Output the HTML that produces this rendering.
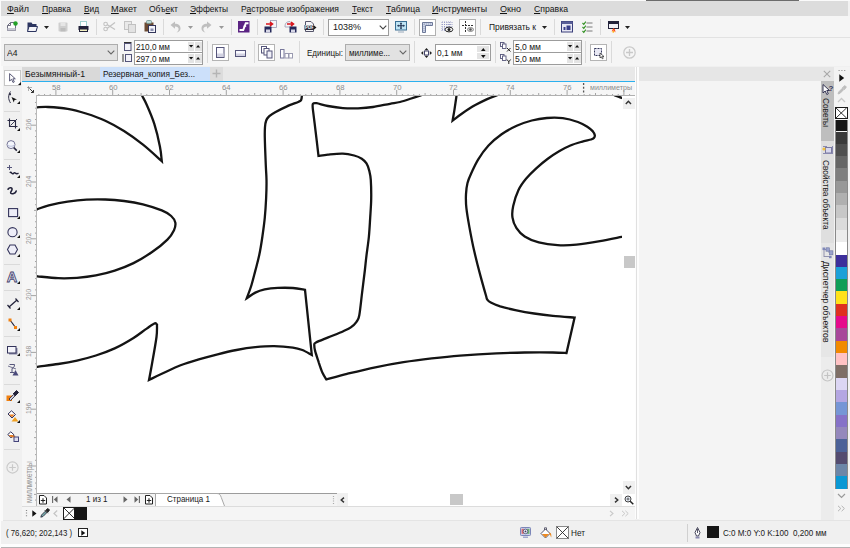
<!DOCTYPE html>
<html lang="ru"><head><meta charset="utf-8"><title>CorelDRAW</title>
<style>
html,body{margin:0;padding:0;}
body{width:850px;height:548px;position:relative;overflow:hidden;background:#f0f0f0;font-family:"Liberation Sans",sans-serif;}
.a{position:absolute;}
.t{position:absolute;white-space:nowrap;transform-origin:0 0;}
svg{position:absolute;overflow:visible;}
u{text-decoration:underline;text-underline-offset:1px;}
</style></head><body>
<div class="a" style="left:0px;top:0px;width:850px;height:1px;background:#fafafa;"></div>
<div class="a" style="left:645.6px;top:0px;width:153px;height:1.2px;background:#6c6c6c;"></div>
<div class="a" style="left:0px;top:1px;width:850px;height:15px;background:#dcdcdc;"></div>
<div class="a" style="left:847.6px;top:1px;width:2.4px;height:15px;background:#f2f2f2;"></div>
<div class="a" style="left:0px;top:16px;width:850px;height:50px;background:#f5f5f5;"></div>
<div class="a" style="left:0px;top:37px;width:850px;height:1px;background:#e2e2e2;"></div>
<div class="a" style="left:0px;top:66px;width:850px;height:482px;background:#f0f0f0;"></div>
<span id="t1" class="t" style="left:7px;top:2.7px;font-size:9px;line-height:12px;color:#151515;transform:scaleX(0.9936);"><u>Ф</u>айл</span>
<span id="t2" class="t" style="left:42px;top:2.7px;font-size:9px;line-height:12px;color:#151515;transform:scaleX(0.9538);"><u>П</u>равка</span>
<span id="t3" class="t" style="left:84px;top:2.7px;font-size:9px;line-height:12px;color:#151515;transform:scaleX(0.9204);"><u>В</u>ид</span>
<span id="t4" class="t" style="left:111px;top:2.7px;font-size:9px;line-height:12px;color:#151515;transform:scaleX(1.0202);"><u>М</u>акет</span>
<span id="t5" class="t" style="left:149px;top:2.7px;font-size:9px;line-height:12px;color:#151515;transform:scaleX(0.9455);">Объ<u>е</u>кт</span>
<span id="t6" class="t" style="left:190px;top:2.7px;font-size:9px;line-height:12px;color:#151515;transform:scaleX(0.9286);"><u>Э</u>ффекты</span>
<span id="t7" class="t" style="left:241px;top:2.7px;font-size:9px;line-height:12px;color:#151515;transform:scaleX(0.9492);">Р<u>а</u>стровые изображения</span>
<span id="t8" class="t" style="left:352px;top:2.7px;font-size:9px;line-height:12px;color:#151515;transform:scaleX(0.9263);"><u>Т</u>екст</span>
<span id="t9" class="t" style="left:386px;top:2.7px;font-size:9px;line-height:12px;color:#151515;transform:scaleX(0.9633);"><u>Т</u>аблица</span>
<span id="t10" class="t" style="left:432px;top:2.7px;font-size:9px;line-height:12px;color:#151515;transform:scaleX(0.9800);"><u>И</u>нструменты</span>
<span id="t11" class="t" style="left:500px;top:2.7px;font-size:9px;line-height:12px;color:#151515;transform:scaleX(1.0030);"><u>О</u>кно</span>
<span id="t12" class="t" style="left:534px;top:2.7px;font-size:9px;line-height:12px;color:#151515;transform:scaleX(0.9628);"><u>С</u>правка</span>
<svg style="left:6px;top:21px" width="12" height="11" viewBox="0 0 12 11"><path d="M1.5 4.5L4.5 1.5H9.5V9.5H1.5Z" fill="#fdfdfd" stroke="#6e6e80" stroke-width="1"/><path d="M1.5 4.5H4.5V1.5" fill="none" stroke="#6e6e80" stroke-width="1"/><rect x="1.5" y="7" width="8" height="2.5" fill="#c9c9d4"/><circle cx="9.5" cy="2.5" r="2.2" fill="#23a127"/></svg>
<svg style="left:27px;top:22px" width="11" height="10" viewBox="0 0 11 10"><path d="M0.5 0.5H4.5L5.5 2H9.5V9.5H0.5Z" fill="#2c3560"/><path d="M2 4.5H10.5L9 9.5H0.5Z" fill="#f4f4f8" stroke="#2c3560" stroke-width="1"/></svg>
<svg style="left:44px;top:26px" width="5" height="3" viewBox="0 0 5 3"><path d="M0 0H5L2.5 3Z" fill="#222"/></svg>
<svg style="left:58px;top:22px" width="10" height="10" viewBox="0 0 10 10"><rect x="0.5" y="0.5" width="9" height="9" rx="1" fill="#cfcfcf"/><rect x="2.5" y="0.5" width="5" height="3.5" fill="#e6e6e6"/><rect x="2.5" y="6" width="5" height="3.5" fill="#bdbdbd"/></svg>
<svg style="left:78px;top:21px" width="11" height="11" viewBox="0 0 11 11"><rect x="2.5" y="0.5" width="6" height="5" fill="#fff" stroke="#9fd0cf" stroke-width="1"/><rect x="0.5" y="5" width="10" height="4" fill="#22223a"/><rect x="1.5" y="8" width="8" height="2.5" fill="#f3f0c0" stroke="#22223a" stroke-width="1"/></svg>
<div class="a" style="left:96px;top:19px;width:1px;height:16px;background:#dadada;"></div>
<svg style="left:103px;top:21px" width="13" height="11" viewBox="0 0 13 11"><path d="M4 3.5L12 8.5M4 7.5L12 1.5" stroke="#c2c2c2" stroke-width="1.2" fill="none"/><circle cx="2.6" cy="3" r="1.8" fill="none" stroke="#c2c2c2" stroke-width="1.1"/><circle cx="2.6" cy="8" r="1.8" fill="none" stroke="#c2c2c2" stroke-width="1.1"/></svg>
<svg style="left:124px;top:21px" width="12" height="12" viewBox="0 0 12 12"><rect x="0.5" y="0.5" width="7" height="8" fill="#e9e9e9" stroke="#c4c4c4"/><rect x="4.5" y="3.5" width="7" height="8" fill="#e2e2e2" stroke="#c0c0c0"/></svg>
<svg style="left:144px;top:20px" width="12" height="13" viewBox="0 0 12 13"><rect x="0.5" y="2.5" width="9" height="9" fill="#6b4a32"/><rect x="2.5" y="0.5" width="5" height="3" rx="1" fill="#b9d7d4" stroke="#6f8f8c" stroke-width=".8"/><rect x="4.5" y="5.5" width="7" height="7" fill="#f4f4fa" stroke="#33365a" stroke-width="1"/><rect x="6.5" y="8.5" width="3" height="2.5" fill="#8a8fb0"/></svg>
<div class="a" style="left:163px;top:19px;width:1px;height:16px;background:#dadada;"></div>
<svg style="left:170px;top:21px" width="11" height="12" viewBox="0 0 11 12"><path d="M0.5 4L5 0.5V2.8C8.5 2.8 10.5 4.8 10.5 7.5C10.5 9.5 9 11 6.5 11.5C8 10.5 8.6 9.3 8.6 8C8.6 6.5 7.4 5.4 5 5.4V7.8Z" fill="#bfbfbf"/></svg>
<svg style="left:188px;top:26px" width="5" height="3" viewBox="0 0 5 3"><path d="M0 0H5L2.5 3Z" fill="#9a9a9a"/></svg>
<svg style="left:201px;top:21px" width="11" height="12" viewBox="0 0 11 12"><path d="M10.5 4L6 0.5V2.8C2.5 2.8 0.5 4.8 0.5 7.5C0.5 9.5 2 11 4.5 11.5C3 10.5 2.4 9.3 2.4 8C2.4 6.5 3.6 5.4 6 5.4V7.8Z" fill="#bfbfbf"/></svg>
<svg style="left:219px;top:26px" width="5" height="3" viewBox="0 0 5 3"><path d="M0 0H5L2.5 3Z" fill="#9a9a9a"/></svg>
<div class="a" style="left:231px;top:19px;width:1px;height:16px;background:#dadada;"></div>
<svg style="left:238px;top:21px" width="12" height="12" viewBox="0 0 12 12"><rect x="0" y="0" width="11.5" height="11.5" fill="#5b2483"/><path d="M10.5 2.2H7.8L5.2 9H1.5" stroke="#fff" stroke-width="2" fill="none"/><path d="M5.5 5.2H8.2" stroke="#fff" stroke-width="1.2"/></svg>
<div class="a" style="left:257px;top:19px;width:1px;height:16px;background:#dadada;"></div>
<svg style="left:264px;top:20px" width="13" height="13" viewBox="0 0 13 13"><rect x="6.5" y="0.5" width="6" height="7" fill="#f4f4f8" stroke="#9a9ab0" stroke-width=".8"/><rect x="0.5" y="6.5" width="7" height="6" fill="#24285a"/><rect x="2" y="9.5" width="4" height="3" fill="#d6d6e6"/><path d="M2 4H8M6 2L8.5 4L6 6" stroke="#d8141c" stroke-width="1.6" fill="none"/></svg>
<svg style="left:284px;top:20px" width="13" height="13" viewBox="0 0 13 13"><path d="M1 6C1 3 3 1.5 6 1.5L8 3.5V7H1Z" fill="#f4f4f8" stroke="#9a9ab0" stroke-width=".8"/><rect x="5.5" y="6.5" width="7" height="6" fill="#24285a"/><rect x="7" y="9.5" width="4" height="3" fill="#d6d6e6"/><path d="M3 4H9M7 2L9.5 4L7 6" stroke="#d8141c" stroke-width="1.6" fill="none"/></svg>
<svg style="left:304px;top:20px" width="13" height="13" viewBox="0 0 13 13"><path d="M1.5 1.5H7L9.5 4V11.5H1.5Z" fill="#f4f4f8" stroke="#55556a" stroke-width="1"/><rect x="0.5" y="5" width="9" height="5" fill="#2b2b3a"/><text x="1" y="9.2" font-size="4.5" font-family="Liberation Sans, sans-serif" fill="#fff" font-weight="bold">PDF</text><path d="M9.5 5L12.5 7.5L9.5 10Z" fill="#1a1a1a"/></svg>
<div class="a" style="left:323px;top:19px;width:1px;height:16px;background:#dadada;"></div>
<div class="a" style="left:328px;top:19px;width:61px;height:17px;background:#ffffff;border:1px solid #9c9c9c;box-sizing:border-box;"></div>
<span id="t13" class="t" style="left:333px;top:21px;font-size:9px;line-height:12px;color:#151515;transform:scaleX(0.9989);">1038%</span>
<svg style="left:379px;top:25px" width="8" height="5" viewBox="0 0 8 5"><path d="M0.7 0.7L4 4L7.3 0.7" stroke="#444" stroke-width="1.1" fill="none"/></svg>
<svg style="left:395px;top:21px" width="12" height="12" viewBox="0 0 12 12"><rect x="0.5" y="0.5" width="11" height="8.5" fill="#bfe4f4" stroke="#3a6f94" stroke-width="1"/><path d="M6 2V7.5M3 4.8H9" stroke="#1c2c4c" stroke-width="1.1"/><path d="M6 1.2L4.8 2.8H7.2ZM6 8.3L4.8 6.7H7.2ZM2 4.8L3.6 3.6V6ZM10 4.8L8.4 3.6V6Z" fill="#1c2c4c"/><rect x="3" y="10.5" width="6" height="1" fill="#9ab"/></svg>
<div class="a" style="left:414px;top:19px;width:1px;height:16px;background:#dadada;"></div>
<div class="a" style="left:419px;top:19px;width:17px;height:17px;background:#ffffff;border:1px solid #b0b0b0;box-sizing:border-box;"></div>
<svg style="left:422px;top:22px" width="11" height="11" viewBox="0 0 11 11"><path d="M0.5 0.5H10.5V3.5H3.5V10.5H0.5Z" fill="#cdd6e8" stroke="#6d7898" stroke-width="1"/><path d="M2 2H9M2 2V9" stroke="#8d96b6" stroke-width=".8" stroke-dasharray="1 1"/></svg>
<svg style="left:441px;top:21px" width="12" height="12" viewBox="0 0 12 12"><path d="M1 1H11M1 3.5H11M1 6H11M1 8.5H5M1 1V11M3.5 1V11M6 1V6M8.5 1V6M11 1V6" stroke="#8a8fc0" stroke-width=".8" stroke-dasharray="1 1" fill="none"/><ellipse cx="8" cy="8.5" rx="3.8" ry="2.4" fill="#fff" stroke="#222" stroke-width="1"/><circle cx="8" cy="8.5" r="1.5" fill="#222"/></svg>
<div class="a" style="left:459px;top:19px;width:17px;height:17px;background:#ffffff;border:1px solid #b0b0b0;box-sizing:border-box;"></div>
<svg style="left:462px;top:21px" width="12" height="12" viewBox="0 0 12 12"><path d="M3.5 0V12M0 4.5H12" stroke="#333" stroke-width="1" stroke-dasharray="2 1" fill="none"/><ellipse cx="8.5" cy="8.5" rx="3" ry="2" fill="#ddd" stroke="#777" stroke-width=".8"/><circle cx="8.5" cy="8.5" r="1.2" fill="#555"/></svg>
<div class="a" style="left:480px;top:19px;width:1px;height:16px;background:#dadada;"></div>
<span id="t14" class="t" style="left:489px;top:21px;font-size:9px;line-height:12px;color:#151515;transform:scaleX(0.9353);">Привязать к</span>
<svg style="left:542px;top:26px" width="5" height="3" viewBox="0 0 5 3"><path d="M0 0H5L2.5 3Z" fill="#222"/></svg>
<div class="a" style="left:554px;top:19px;width:1px;height:16px;background:#dadada;"></div>
<svg style="left:561px;top:21px" width="12" height="12" viewBox="0 0 12 12"><rect x="0.5" y="0.5" width="11" height="10.5" fill="#e8e8f4" stroke="#3a3f7a" stroke-width="1"/><rect x="0.5" y="0.5" width="11" height="2.5" fill="#5a5f98"/><path d="M2.5 9V6H4.5V9M5.5 9V4.5H9.5V9Z" fill="#3a3f8a"/></svg>
<svg style="left:582px;top:21px" width="11" height="12" viewBox="0 0 11 12"><path d="M4.5 2H10.5M4.5 6H10.5M4.5 10H10.5" stroke="#7a7a7a" stroke-width="1"/><path d="M0.5 2L1.8 3.3L3.8 0.6M0.5 6L1.8 7.3L3.8 4.6M0.5 10L1.8 11.3L3.8 8.6" stroke="#2f8f1f" stroke-width="1.1" fill="none"/></svg>
<div class="a" style="left:600px;top:19px;width:1px;height:16px;background:#dadada;"></div>
<svg style="left:608px;top:21px" width="11" height="12" viewBox="0 0 11 12"><rect x="0.5" y="0.5" width="10" height="7" fill="#f0f0f6" stroke="#22223a" stroke-width="1"/><rect x="0.5" y="0.5" width="10" height="2.5" fill="#22223a"/><path d="M5.5 7L3.5 10.5L5.5 9.5L7.5 11.5L7 8.5Z" fill="#ff4a1a"/><circle cx="5.3" cy="10.8" r="1" fill="#ffb21a"/></svg>
<svg style="left:625px;top:26px" width="5" height="3" viewBox="0 0 5 3"><path d="M0 0H5L2.5 3Z" fill="#222"/></svg>
<div class="a" style="left:4px;top:44px;width:114px;height:17px;background:#e2e2e2;border:1px solid #adadad;box-sizing:border-box;"></div>
<span id="t15" class="t" style="left:6.5px;top:46.5px;font-size:9px;line-height:12px;color:#151515;transform:scaleX(0.9532);">A4</span>
<svg style="left:107px;top:50px" width="8" height="5" viewBox="0 0 8 5"><path d="M0.7 0.7L4 4L7.3 0.7" stroke="#666" stroke-width="1.1" fill="none"/></svg>
<svg style="left:124px;top:42px" width="8" height="9" viewBox="0 0 8 9"><rect x="0.5" y="1.5" width="6.5" height="7" fill="#f2f2f8" stroke="#55557a" stroke-width="1"/><path d="M0 0.5H7.5" stroke="#333" stroke-width="1"/></svg>
<svg style="left:122px;top:54px" width="10" height="8" viewBox="0 0 10 8"><rect x="3.5" y="0.5" width="6" height="7" fill="#f2f2f8" stroke="#55557a" stroke-width="1"/><path d="M1 0V8" stroke="#333" stroke-width="1"/></svg>
<div class="a" style="left:133.5px;top:40px;width:69px;height:12.5px;background:#ffffff;border:1px solid #9c9c9c;box-sizing:border-box;"></div>
<span id="t16" class="t" style="left:136.0px;top:41.7px;font-size:9px;line-height:11px;color:#151515;transform:scaleX(0.9089);">210,0 мм</span>
<div class="a" style="left:187.5px;top:42px;width:6.5px;height:9px;background:#e4e4e4;"></div>
<div class="a" style="left:195.0px;top:42px;width:6.5px;height:9px;background:#e4e4e4;"></div>
<svg style="left:188.7px;top:45.2px" width="5" height="3" viewBox="0 0 5 3"><path d="M0 0H4.2L2.1 2.6Z" fill="#111"/></svg>
<svg style="left:196.2px;top:45.2px" width="5" height="3" viewBox="0 0 5 3"><path d="M0 2.6H4.2L2.1 0Z" fill="#111"/></svg>
<div class="a" style="left:133.5px;top:52px;width:69px;height:12.5px;background:#ffffff;border:1px solid #9c9c9c;box-sizing:border-box;"></div>
<span id="t17" class="t" style="left:136.0px;top:53.7px;font-size:9px;line-height:11px;color:#151515;transform:scaleX(0.9089);">297,0 мм</span>
<div class="a" style="left:187.5px;top:54px;width:6.5px;height:9px;background:#e4e4e4;"></div>
<div class="a" style="left:195.0px;top:54px;width:6.5px;height:9px;background:#e4e4e4;"></div>
<svg style="left:188.7px;top:57.2px" width="5" height="3" viewBox="0 0 5 3"><path d="M0 0H4.2L2.1 2.6Z" fill="#111"/></svg>
<svg style="left:196.2px;top:57.2px" width="5" height="3" viewBox="0 0 5 3"><path d="M0 2.6H4.2L2.1 0Z" fill="#111"/></svg>
<div class="a" style="left:207px;top:41px;width:1px;height:22px;background:#dadada;"></div>
<div class="a" style="left:212px;top:44px;width:17px;height:17px;background:#ffffff;border:1px solid #b4b4b4;box-sizing:border-box;"></div>
<svg style="left:216px;top:47px" width="9" height="11" viewBox="0 0 9 11"><rect x="0.5" y="0.5" width="7.5" height="10" fill="#fafaff" stroke="#55557a" stroke-width="1"/><rect x="1" y="6.5" width="6.5" height="3.5" fill="#d2d2e2"/></svg>
<svg style="left:235px;top:50px" width="11" height="7" viewBox="0 0 11 7"><rect x="0.5" y="0.5" width="10" height="6" fill="#fafaff" stroke="#55557a" stroke-width="1"/><rect x="1" y="3.5" width="9" height="2.5" fill="#d2d2e2"/></svg>
<div class="a" style="left:254px;top:41px;width:1px;height:22px;background:#dadada;"></div>
<div class="a" style="left:258px;top:44px;width:17px;height:17px;background:#ffffff;border:1px solid #b4b4b4;box-sizing:border-box;"></div>
<svg style="left:261px;top:46px" width="12" height="13" viewBox="0 0 12 13"><rect x="0.5" y="0.5" width="5" height="6.5" fill="#fff" stroke="#55557a" stroke-width="1"/><rect x="3" y="2.5" width="5" height="6.5" fill="#fff" stroke="#55557a" stroke-width="1"/><rect x="6" y="5" width="5" height="7" fill="#f0f0f8" stroke="#55557a" stroke-width="1"/></svg>
<svg style="left:280px;top:49px" width="13" height="10" viewBox="0 0 13 10"><rect x="0.5" y="0.5" width="3.5" height="8.5" fill="#fff" stroke="#77779a" stroke-width="1"/><rect x="5" y="4.5" width="3.5" height="4.5" fill="#fff" stroke="#9a9ab0" stroke-width="1"/><rect x="9" y="4.5" width="3.5" height="4.5" fill="#fff" stroke="#9a9ab0" stroke-width="1"/></svg>
<div class="a" style="left:299px;top:41px;width:1px;height:22px;background:#dadada;"></div>
<span id="t18" class="t" style="left:307px;top:46.5px;font-size:9px;line-height:12px;color:#151515;transform:scaleX(0.8910);">Единицы:</span>
<div class="a" style="left:345px;top:44px;width:65px;height:17px;background:#e2e2e2;border:1px solid #adadad;box-sizing:border-box;"></div>
<span id="t19" class="t" style="left:348.5px;top:46.5px;font-size:9px;line-height:12px;color:#151515;transform:scaleX(0.9020);">миллиме...</span>
<svg style="left:399px;top:50px" width="8" height="5" viewBox="0 0 8 5"><path d="M0.7 0.7L4 4L7.3 0.7" stroke="#666" stroke-width="1.1" fill="none"/></svg>
<div class="a" style="left:414px;top:41px;width:1px;height:22px;background:#dadada;"></div>
<svg style="left:421px;top:48px" width="11" height="10" viewBox="0 0 11 10"><path d="M5.5 0L7.5 2.2H3.5ZM5.5 10L7.5 7.8H3.5ZM0 5L2.2 3V7ZM11 5L8.8 3V7Z" fill="#222"/><rect x="3.5" y="3" width="4" height="4" fill="#fff" stroke="#44446a" stroke-width="1"/></svg>
<div class="a" style="left:434.5px;top:44px;width:56px;height:16.5px;background:#ffffff;border:1px solid #9c9c9c;box-sizing:border-box;"></div>
<span id="t20" class="t" style="left:436.5px;top:46.5px;font-size:9px;line-height:12px;color:#151515;transform:scaleX(0.9310);">0,1 мм</span>
<div class="a" style="left:477px;top:46px;width:11.5px;height:6px;background:#e4e4e4;"></div>
<div class="a" style="left:477px;top:53px;width:11.5px;height:6px;background:#e4e4e4;"></div>
<svg style="left:480.5px;top:47.5px" width="5" height="3" viewBox="0 0 5 3"><path d="M0 3H4.6L2.3 0Z" fill="#111"/></svg>
<svg style="left:480.5px;top:54.5px" width="5" height="3" viewBox="0 0 5 3"><path d="M0 0H4.6L2.3 3Z" fill="#111"/></svg>
<div class="a" style="left:495px;top:41px;width:1px;height:22px;background:#dadada;"></div>
<svg style="left:500px;top:42px" width="12" height="10" viewBox="0 0 12 10"><rect x="0.5" y="0.5" width="3.5" height="4" fill="#fff" stroke="#55557a" stroke-width=".9"/><rect x="2.5" y="2" width="3.5" height="4.5" fill="#fff" stroke="#55557a" stroke-width=".9"/><path d="M7 6L10.5 9.5M10.5 6L7 9.5" stroke="#222" stroke-width="1"/></svg>
<svg style="left:500px;top:54px" width="12" height="10" viewBox="0 0 12 10"><rect x="0.5" y="0.5" width="3.5" height="4" fill="#fff" stroke="#55557a" stroke-width=".9"/><rect x="2.5" y="2" width="3.5" height="4.5" fill="#fff" stroke="#55557a" stroke-width=".9"/><path d="M7 5.5L8.8 7.8L10.6 5.5M8.8 7.8V10" stroke="#222" stroke-width="1" fill="none"/></svg>
<div class="a" style="left:512.5px;top:40px;width:69px;height:12.5px;background:#ffffff;border:1px solid #9c9c9c;box-sizing:border-box;"></div>
<span id="t21" class="t" style="left:515.0px;top:41.7px;font-size:9px;line-height:11px;color:#151515;transform:scaleX(0.9492);">5,0 мм</span>
<div class="a" style="left:566.5px;top:42px;width:6.5px;height:9px;background:#e4e4e4;"></div>
<div class="a" style="left:574.0px;top:42px;width:6.5px;height:9px;background:#e4e4e4;"></div>
<svg style="left:567.7px;top:45.2px" width="5" height="3" viewBox="0 0 5 3"><path d="M0 0H4.2L2.1 2.6Z" fill="#111"/></svg>
<svg style="left:575.2px;top:45.2px" width="5" height="3" viewBox="0 0 5 3"><path d="M0 2.6H4.2L2.1 0Z" fill="#111"/></svg>
<div class="a" style="left:512.5px;top:52px;width:69px;height:12.5px;background:#ffffff;border:1px solid #9c9c9c;box-sizing:border-box;"></div>
<span id="t22" class="t" style="left:515.0px;top:53.7px;font-size:9px;line-height:11px;color:#151515;transform:scaleX(0.9492);">5,0 мм</span>
<div class="a" style="left:566.5px;top:54px;width:6.5px;height:9px;background:#e4e4e4;"></div>
<div class="a" style="left:574.0px;top:54px;width:6.5px;height:9px;background:#e4e4e4;"></div>
<svg style="left:567.7px;top:57.2px" width="5" height="3" viewBox="0 0 5 3"><path d="M0 0H4.2L2.1 2.6Z" fill="#111"/></svg>
<svg style="left:575.2px;top:57.2px" width="5" height="3" viewBox="0 0 5 3"><path d="M0 2.6H4.2L2.1 0Z" fill="#111"/></svg>
<div class="a" style="left:585px;top:41px;width:1px;height:22px;background:#dadada;"></div>
<div class="a" style="left:590px;top:44px;width:17px;height:17px;background:#ffffff;border:1px solid #b4b4b4;box-sizing:border-box;"></div>
<svg style="left:593px;top:47px" width="12" height="12" viewBox="0 0 12 12"><rect x="1.5" y="1.5" width="7" height="7" fill="#e8e8f4" stroke="#33365a" stroke-width="1" stroke-dasharray="2 1"/><path d="M7 6V11L8.3 9.8L9.3 11.8L10.2 11.3L9.3 9.5H11Z" fill="#fff" stroke="#222" stroke-width=".7"/></svg>
<div class="a" style="left:611px;top:41px;width:1px;height:22px;background:#dadada;"></div>
<svg style="left:623px;top:46.2px" width="13" height="13" viewBox="0 0 13 13"><circle cx="6.5" cy="6.5" r="5.7" fill="none" stroke="#c9c9c9" stroke-width="1.2"/><path d="M6.5 3V10M3 6.5H10" stroke="#c9c9c9" stroke-width="1.3"/></svg>
<div class="a" style="left:22px;top:66.5px;width:614px;height:14.5px;background:#e8e8e8;"></div>
<div class="a" style="left:22px;top:66.5px;width:78px;height:14.5px;background:#d9d9d9;"></div>
<div class="a" style="left:100px;top:66.5px;width:109.5px;height:14.5px;background:#cce0fa;"></div>
<div class="a" style="left:209.5px;top:66.5px;width:13.5px;height:14.5px;background:#dcdcdc;"></div>
<span id="t23" class="t" style="left:25px;top:68px;font-size:9px;line-height:12px;color:#151515;transform:scaleX(0.9707);">Безымянный-1</span>
<span id="t24" class="t" style="left:102.5px;top:68px;font-size:9px;line-height:12px;color:#151515;transform:scaleX(0.9176);">Резервная_копия_Без...</span>
<svg style="left:212.2px;top:69.2px" width="9" height="9"><path d="M4.5 0.5V8.5M0.5 4.5H8.5" stroke="#b4b4b4" stroke-width="1.4" fill="none"/></svg>
<div class="a" style="left:22px;top:81px;width:612.7px;height:1.2px;background:#2cb0ee;"></div>
<div class="a" style="left:22px;top:82px;width:614px;height:14px;background:#f6f6f6;"></div>
<div class="a" style="left:22px;top:82px;width:15px;height:424px;background:#f6f6f6;"></div>
<div class="a" style="left:37px;top:96px;width:586px;height:397px;background:#ffffff;"></div>
<div class="a" style="left:36px;top:95px;width:598.7px;height:1px;background:#b0b0b0;"></div>
<div class="a" style="left:36px;top:95px;width:1px;height:411px;background:#b8b8b8;"></div>
<svg style="left:0;top:0" width="850" height="548"><path d="M38.86 94V95 M44.54 94V95 M50.22 94V95 M55.90 90V95 M61.58 94V95 M67.26 94V95 M72.94 94V95 M78.62 94V95 M84.30 93V95 M89.98 94V95 M95.66 94V95 M101.34 94V95 M107.02 94V95 M112.70 90V95 M118.38 94V95 M124.06 94V95 M129.74 94V95 M135.42 94V95 M141.10 93V95 M146.78 94V95 M152.46 94V95 M158.14 94V95 M163.82 94V95 M169.50 90V95 M175.18 94V95 M180.86 94V95 M186.54 94V95 M192.22 94V95 M197.90 93V95 M203.58 94V95 M209.26 94V95 M214.94 94V95 M220.62 94V95 M226.30 90V95 M231.98 94V95 M237.66 94V95 M243.34 94V95 M249.02 94V95 M254.70 93V95 M260.38 94V95 M266.06 94V95 M271.74 94V95 M277.42 94V95 M283.10 90V95 M288.78 94V95 M294.46 94V95 M300.14 94V95 M305.82 94V95 M311.50 93V95 M317.18 94V95 M322.86 94V95 M328.54 94V95 M334.22 94V95 M339.90 90V95 M345.58 94V95 M351.26 94V95 M356.94 94V95 M362.62 94V95 M368.30 93V95 M373.98 94V95 M379.66 94V95 M385.34 94V95 M391.02 94V95 M396.70 90V95 M402.38 94V95 M408.06 94V95 M413.74 94V95 M419.42 94V95 M425.10 93V95 M430.78 94V95 M436.46 94V95 M442.14 94V95 M447.82 94V95 M453.50 90V95 M459.18 94V95 M464.86 94V95 M470.54 94V95 M476.22 94V95 M481.90 93V95 M487.58 94V95 M493.26 94V95 M498.94 94V95 M504.62 94V95 M510.30 90V95 M515.98 94V95 M521.66 94V95 M527.34 94V95 M533.02 94V95 M538.70 93V95 M544.38 94V95 M550.06 94V95 M555.74 94V95 M561.42 94V95 M567.10 90V95 M572.78 94V95 M578.46 94V95 M584.14 94V95 M589.82 94V95 M595.50 93V95 M601.18 94V95 M606.86 94V95 M612.54 94V95 M618.22 94V95 M623.90 90V95 M629.58 94V95" stroke="#9a9a9a" stroke-width="0.9" fill="none"/></svg>
<span id="t25" class="t" style="left:51.7px;top:83px;font-size:8px;line-height:10px;color:#8c8c8c;transform:scaleX(0.9656);">58</span>
<span id="t26" class="t" style="left:108.5px;top:83px;font-size:8px;line-height:10px;color:#8c8c8c;transform:scaleX(0.9656);">60</span>
<span id="t27" class="t" style="left:165.3px;top:83px;font-size:8px;line-height:10px;color:#8c8c8c;transform:scaleX(0.9656);">62</span>
<span id="t28" class="t" style="left:222.1px;top:83px;font-size:8px;line-height:10px;color:#8c8c8c;transform:scaleX(0.9656);">64</span>
<span id="t29" class="t" style="left:278.9px;top:83px;font-size:8px;line-height:10px;color:#8c8c8c;transform:scaleX(0.9656);">66</span>
<span id="t30" class="t" style="left:335.7px;top:83px;font-size:8px;line-height:10px;color:#8c8c8c;transform:scaleX(0.9656);">68</span>
<span id="t31" class="t" style="left:392.5px;top:83px;font-size:8px;line-height:10px;color:#8c8c8c;transform:scaleX(0.9656);">70</span>
<span id="t32" class="t" style="left:449.3px;top:83px;font-size:8px;line-height:10px;color:#8c8c8c;transform:scaleX(0.9656);">72</span>
<span id="t33" class="t" style="left:506.1px;top:83px;font-size:8px;line-height:10px;color:#8c8c8c;transform:scaleX(0.9656);">74</span>
<span id="t34" class="t" style="left:562.9px;top:83px;font-size:8px;line-height:10px;color:#8c8c8c;transform:scaleX(0.9656);">76</span>
<svg style="left:0;top:0" width="850" height="548"><path d="M583.6 83V94" stroke="#555" stroke-width="1.3" stroke-dasharray="2 1.7" fill="none"/></svg>
<span id="t35" class="t" style="left:590px;top:83px;font-size:8px;line-height:10px;color:#8c8c8c;transform:scaleX(0.8874);">миллиметры</span>
<svg style="left:27px;top:86px" width="8" height="8"><path d="M0.5 1.5H5M1.5 0.5V5" stroke="#555" stroke-width="0.9" stroke-dasharray="1 1" fill="none"/><path d="M2.5 2.5L6.5 6.5M6.5 4V6.5H4" stroke="#333" stroke-width="1" fill="none"/></svg>
<svg style="left:0;top:0" width="850" height="548"><path d="M35 102.48H36 M35 108.16H36 M35 113.84H36 M35 119.52H36 M31 125.20H36 M35 130.88H36 M35 136.56H36 M35 142.24H36 M35 147.92H36 M34 153.60H36 M35 159.28H36 M35 164.96H36 M35 170.64H36 M35 176.32H36 M31 182.00H36 M35 187.68H36 M35 193.36H36 M35 199.04H36 M35 204.72H36 M34 210.40H36 M35 216.08H36 M35 221.76H36 M35 227.44H36 M35 233.12H36 M31 238.80H36 M35 244.48H36 M35 250.16H36 M35 255.84H36 M35 261.52H36 M34 267.20H36 M35 272.88H36 M35 278.56H36 M35 284.24H36 M35 289.92H36 M31 295.60H36 M35 301.28H36 M35 306.96H36 M35 312.64H36 M35 318.32H36 M34 324.00H36 M35 329.68H36 M35 335.36H36 M35 341.04H36 M35 346.72H36 M31 352.40H36 M35 358.08H36 M35 363.76H36 M35 369.44H36 M35 375.12H36 M34 380.80H36 M35 386.48H36 M35 392.16H36 M35 397.84H36 M35 403.52H36 M31 409.20H36 M35 414.88H36 M35 420.56H36 M35 426.24H36 M35 431.92H36 M34 437.60H36 M35 443.28H36 M35 448.96H36 M35 454.64H36 M35 460.32H36 M31 466.00H36 M35 471.68H36 M35 477.36H36 M35 483.04H36 M35 488.72H36 M34 494.40H36 M35 500.08H36" stroke="#9a9a9a" stroke-width="0.9" fill="none"/></svg>
<span class="t" style="left:25.3px;top:130.0px;font-size:8px;line-height:8px;color:#949494;transform:rotate(-90deg) scaleX(0.84);transform-origin:0 0;">206</span>
<span class="t" style="left:25.3px;top:186.8px;font-size:8px;line-height:8px;color:#949494;transform:rotate(-90deg) scaleX(0.84);transform-origin:0 0;">204</span>
<span class="t" style="left:25.3px;top:243.6px;font-size:8px;line-height:8px;color:#949494;transform:rotate(-90deg) scaleX(0.84);transform-origin:0 0;">202</span>
<span class="t" style="left:25.3px;top:300.4px;font-size:8px;line-height:8px;color:#949494;transform:rotate(-90deg) scaleX(0.84);transform-origin:0 0;">200</span>
<span class="t" style="left:25.3px;top:357.2px;font-size:8px;line-height:8px;color:#949494;transform:rotate(-90deg) scaleX(0.84);transform-origin:0 0;">198</span>
<span class="t" style="left:25.3px;top:414.0px;font-size:8px;line-height:8px;color:#949494;transform:rotate(-90deg) scaleX(0.84);transform-origin:0 0;">196</span>
<span class="t" style="left:24.5px;top:502.8px;font-size:8.5px;line-height:8px;color:#949494;transform:rotate(-90deg) scaleX(0.83);transform-origin:0 0;">миллиметры</span>
<svg style="left:37px;top:96px;overflow:hidden" width="585.3" height="397" viewBox="37 96 585.3 397"><g fill="none" stroke="#141414" stroke-width="2.3" stroke-linejoin="miter" stroke-linecap="butt"><path d="M33.0 107.5 C33.7 107.5 34.5 107.4 37.0 107.3 C39.5 107.2 42.9 106.8 48.0 107.0 C53.1 107.2 61.4 107.7 67.7 108.8 C74.0 109.9 79.7 111.5 86.0 113.5 C92.3 115.5 99.0 117.8 105.3 120.7 C111.6 123.6 117.7 127.0 124.0 131.0 C130.3 135.0 136.7 139.6 143.0 144.6 C149.3 149.6 158.7 158.4 161.8 161.2 C161.5 158.8 161.2 152.7 159.9 146.5 C158.7 140.3 156.5 130.8 154.3 123.9 C152.1 117.0 148.9 109.7 146.8 105.0 C144.8 100.3 143.0 97.6 142.0 95.6 C141.0 93.6 141.2 93.4 141.0 93.0"/>
<path d="M33.0 210.5 C33.8 210.3 34.9 210.0 37.5 209.1 C40.1 208.2 43.8 206.6 48.8 205.3 C53.8 204.1 61.3 202.5 67.6 201.6 C73.9 200.7 80.2 200.0 86.5 199.7 C92.8 199.3 99.0 199.3 105.3 199.5 C111.6 199.7 117.8 200.2 124.1 201.0 C130.4 201.8 136.6 202.8 142.9 204.4 C149.2 206.0 157.1 208.5 161.8 210.4 C166.5 212.3 168.9 214.0 171.2 216.0 C173.4 218.0 174.8 220.2 175.3 222.6 C175.8 225.0 175.3 227.4 174.0 230.2 C172.7 233.0 171.0 236.0 167.4 239.6 C163.8 243.2 158.1 247.9 152.4 251.8 C146.8 255.7 139.8 260.0 133.5 263.1 C127.2 266.2 121.0 268.6 114.7 270.6 C108.4 272.7 102.2 274.2 95.9 275.4 C89.6 276.6 83.3 277.3 77.0 277.8 C70.7 278.3 64.8 278.4 58.2 278.2 C51.6 277.9 41.7 276.7 37.5 276.3 C33.3 275.9 33.8 275.9 33.0 275.8"/>
<path d="M33.0 367.3 C33.8 367.2 33.3 367.4 37.5 366.8 C41.7 366.2 51.6 365.0 58.2 364.0 C64.8 363.0 70.7 362.0 77.0 360.6 C83.3 359.2 89.6 357.5 95.9 355.5 C102.2 353.5 108.4 351.3 114.7 348.4 C121.0 345.5 128.2 341.3 133.5 338.0 C138.8 334.7 143.1 331.0 146.7 328.6 C150.2 326.2 153.1 324.0 154.8 323.4 C156.5 322.8 156.6 324.6 157.0 324.8 C156.9 326.8 157.3 330.9 156.5 337.0 C155.7 343.1 153.7 354.3 152.4 361.5 C151.2 368.7 149.6 376.9 149.0 380.0 C151.1 379.0 156.5 376.2 161.8 373.8 C167.1 371.4 174.4 367.7 180.6 365.3 C186.8 362.9 192.6 361.2 198.8 359.4 C205.0 357.6 211.3 355.9 217.6 354.3 C223.9 352.7 230.2 351.2 236.5 350.0 C242.8 348.8 249.0 347.8 255.3 347.2 C261.6 346.6 267.8 346.1 274.1 346.2 C280.4 346.3 288.2 347.0 292.9 347.6 C297.6 348.2 299.2 348.8 302.4 350.0 C305.5 351.2 310.2 354.2 311.8 355.0 L305.0 289.8 C303.0 289.5 297.4 288.3 292.9 288.0 C288.4 287.7 282.6 287.7 277.9 287.9 C273.2 288.1 268.5 288.6 264.7 289.4 C260.9 290.2 258.3 291.1 255.3 292.6 C252.3 294.1 248.2 297.3 246.8 298.2 C247.6 296.0 250.1 289.6 251.5 285.0 C252.9 280.4 254.1 275.3 255.4 270.4 C256.7 265.4 258.0 260.9 259.2 255.3 C260.4 249.7 261.5 242.8 262.4 236.5 C263.3 230.2 264.2 223.9 264.8 217.6 C265.4 211.3 265.8 205.1 266.1 198.8 C266.4 192.5 266.6 185.6 266.5 180.0 C266.4 174.4 266.1 172.5 265.8 165.3 C265.5 158.1 264.9 143.4 264.8 137.0 C264.7 130.6 264.8 129.8 265.0 127.0 C265.2 124.2 265.5 122.3 266.2 120.5 C266.9 118.7 267.8 117.6 269.3 116.2 C270.8 114.8 272.3 113.8 275.2 112.2 C278.1 110.6 282.6 108.3 286.5 106.6 C290.4 104.8 296.2 102.8 298.7 101.7 C301.1 100.6 300.7 100.8 301.2 99.8 C301.7 98.8 301.8 96.7 301.9 95.6 C302.0 94.5 302.0 93.4 302.0 93.0"/>
<path d="M425.0 93.5 C424.3 93.8 423.0 94.5 420.7 95.3 C418.4 96.1 414.8 97.4 411.3 98.5 C407.9 99.6 403.6 101.1 400.0 102.0 C396.4 102.9 394.5 103.0 390.0 103.8 C385.5 104.6 378.3 106.2 373.0 107.0 C367.7 107.8 363.0 108.1 358.0 108.3 C353.0 108.5 347.9 108.5 342.9 108.1 C337.9 107.7 332.3 106.8 327.9 106.0 C323.5 105.2 319.1 103.6 316.6 103.2 C314.1 102.8 313.5 102.9 312.9 103.8 C312.3 104.7 312.8 108.0 312.8 108.8 C313.3 112.6 314.7 123.6 315.6 131.4 C316.6 139.2 318.0 151.8 318.5 155.9 C320.1 155.7 323.8 155.0 327.9 154.6 C332.0 154.2 338.5 153.4 342.9 153.6 C347.3 153.8 351.0 154.7 354.2 155.5 C357.4 156.3 359.8 157.4 361.8 158.7 C363.9 160.0 365.2 161.4 366.5 163.4 C367.8 165.4 368.6 168.1 369.3 170.9 C370.0 173.7 370.5 175.3 370.8 180.0 C371.1 184.7 371.3 192.5 371.2 198.8 C371.1 205.1 370.6 211.3 370.2 217.6 C369.8 223.9 369.5 230.2 368.9 236.5 C368.3 242.8 367.2 249.7 366.5 255.3 C365.8 260.9 365.6 263.8 364.9 270.0 C364.2 276.2 363.0 285.1 362.1 292.6 C361.2 300.1 360.2 310.3 359.3 315.2 C358.4 320.1 357.9 319.8 356.5 321.8 C355.1 323.8 353.0 325.8 350.8 327.4 C348.6 329.0 347.1 329.5 343.3 331.2 C339.5 332.9 332.8 335.5 328.2 337.4 C323.6 339.3 318.3 341.3 316.0 342.5 C313.7 343.7 314.4 343.4 314.3 344.8 C314.2 346.2 314.4 347.9 315.1 350.9 C315.9 353.9 317.6 358.9 318.8 362.6 C320.1 366.3 321.3 370.2 322.6 373.0 C323.9 375.8 325.8 378.4 326.4 379.5 C329.8 378.6 338.9 375.9 347.0 373.9 C355.1 371.9 365.9 369.2 375.3 367.3 C384.7 365.4 394.1 363.7 403.5 362.2 C412.9 360.7 422.4 359.5 431.8 358.4 C441.2 357.3 449.2 356.4 460.0 355.6 C470.8 354.8 485.7 353.9 496.5 353.4 C507.3 352.9 515.3 352.6 524.7 352.5 C534.1 352.4 545.9 352.4 552.9 352.5 C559.9 352.6 564.2 352.9 566.5 353.0 L574.6 317.6 C571.0 317.3 559.6 316.5 552.9 315.8 C546.1 315.1 540.4 314.4 534.1 313.5 C527.8 312.6 520.9 311.3 515.3 310.1 C509.6 308.9 504.3 307.6 500.2 306.4 C496.1 305.1 492.9 303.7 490.8 302.6 C488.7 301.5 488.1 300.8 487.3 299.6 C486.5 298.4 487.1 299.6 485.9 295.3 C484.7 291.1 482.0 281.6 480.0 274.1 C478.0 266.7 475.9 258.4 474.1 250.6 C472.3 242.8 470.7 234.2 469.4 227.1 C468.1 220.0 467.0 213.7 466.4 208.2 C465.8 202.7 465.8 198.3 466.0 194.1 C466.2 189.9 466.6 186.6 467.5 183.0 C468.4 179.4 469.7 176.7 471.5 172.8 C473.3 168.9 475.3 164.2 478.1 159.6 C480.9 155.0 484.6 149.7 488.5 145.5 C492.4 141.3 496.9 137.5 501.6 134.2 C506.3 130.9 511.7 128.1 516.7 125.8 C521.7 123.5 526.8 121.8 531.8 120.5 C536.8 119.2 541.6 118.4 546.8 118.0 C552.0 117.6 557.6 117.5 562.8 118.2 C568.0 118.9 573.8 120.6 577.9 122.0 C582.0 123.4 584.8 125.1 587.3 126.7 C589.8 128.3 591.6 130.0 592.9 131.4 C594.1 132.8 594.6 134.1 594.8 135.2 C595.0 136.3 594.5 137.3 593.9 138.0 C593.3 138.7 593.1 138.9 591.1 139.5 C589.1 140.1 585.1 140.8 581.6 141.8 C578.1 142.8 574.1 143.9 570.4 145.5 C566.6 147.1 562.9 149.0 559.1 151.2 C555.3 153.4 551.6 155.9 547.8 158.7 C544.0 161.5 540.1 164.8 536.5 168.1 C532.9 171.4 529.0 175.2 526.0 178.8 C523.0 182.5 520.6 185.5 518.5 190.0 C516.4 194.5 514.2 201.3 513.2 205.9 C512.2 210.5 511.9 213.9 512.5 217.6 C513.0 221.3 514.5 225.0 516.5 228.2 C518.5 231.3 521.0 234.1 524.7 236.5 C528.4 238.9 533.3 241.0 538.8 242.4 C544.3 243.8 551.3 244.8 557.6 245.2 C563.9 245.6 569.4 245.4 576.5 244.7 C583.6 244.0 592.5 242.5 600.0 241.2 C607.5 239.9 617.1 237.8 621.6 236.9 C626.1 236.0 626.1 236.0 627.0 235.8"/>
<path d="M456.6 93.0 C456.6 93.4 456.8 93.0 456.5 95.6 C456.2 98.2 455.2 104.6 454.6 108.8 C454.0 113.0 452.9 118.6 452.6 120.6 C454.2 119.4 458.3 116.1 462.1 113.5 C465.9 110.9 471.2 107.4 475.3 105.1 C479.4 102.8 483.2 101.0 486.6 99.4 C490.1 97.8 493.4 96.6 496.0 95.6 C498.6 94.6 501.0 93.7 502.0 93.3"/>
<path d="M611.0 93.5 C611.8 93.8 614.2 95.0 615.5 95.6 C616.8 96.1 617.9 96.4 619.0 96.8 C620.1 97.2 620.8 97.5 622.0 98.0 C623.2 98.5 625.3 99.7 626.0 100.0"/></g></svg>
<div class="a" style="left:623px;top:96px;width:12px;height:397px;background:#ffffff;"></div>
<div class="a" style="left:623px;top:98px;width:11.5px;height:10.5px;background:#f0f0f0;"></div>
<svg style="left:625px;top:100px" width="7" height="5"><path d="M0.8 4L3.4 1.2L6 4" stroke="#333" stroke-width="1.4" fill="none"/></svg>
<div class="a" style="left:623.5px;top:256px;width:11px;height:12px;background:#c8c8c8;"></div>
<div class="a" style="left:623px;top:481px;width:11.5px;height:11.7px;background:#f0f0f0;"></div>
<svg style="left:625px;top:484.5px" width="7" height="5"><path d="M0.8 1L3.4 3.8L6 1" stroke="#333" stroke-width="1.4" fill="none"/></svg>
<div class="a" style="left:635.2px;top:66.8px;width:3.7px;height:452.5px;background:#fdfdfd;"></div>
<div class="a" style="left:636.1px;top:66.8px;width:0.9px;height:452.5px;background:#e0e0e0;"></div>
<div class="a" style="left:638.9px;top:66.8px;width:182.2px;height:454px;background:#f4f4f4;"></div>
<div class="a" style="left:638.9px;top:66.8px;width:195.1px;height:14px;background:#e6e6e6;"></div>
<svg style="left:823px;top:70px" width="8" height="8" viewBox="0 0 8 8"><path d="M0.8 0.8L7.2 7.2M7.2 0.8L0.8 7.2" stroke="#a8a8a8" stroke-width="1.1"/></svg>
<div class="a" style="left:821px;top:81px;width:13px;height:440px;background:#ececec;"></div>
<div class="a" style="left:821px;top:81px;width:13px;height:60px;background:#bebebe;"></div>
<div class="a" style="left:821px;top:141px;width:13px;height:102px;background:#dfdfdf;"></div>
<div class="a" style="left:821px;top:242.5px;width:13px;height:114px;background:#e6e6e6;"></div>
<span id="t36" class="t" style="left:831.7px;top:98.3px;font-size:8.5px;line-height:12px;color:#1a1a1a;transform-origin:0 0;transform:rotate(90deg) scaleX(0.9753);">Советы</span>
<span id="t37" class="t" style="left:831.7px;top:159.5px;font-size:8.5px;line-height:12px;color:#1a1a1a;transform-origin:0 0;transform:rotate(90deg) scaleX(0.9735);">Свойства объекта</span>
<span id="t38" class="t" style="left:831.7px;top:260.5px;font-size:8.5px;line-height:12px;color:#1a1a1a;transform-origin:0 0;transform:rotate(90deg) scaleX(1.0168);">Диспетчер объектов</span>
<svg style="left:822px;top:84px" width="12" height="12" viewBox="0 0 12 12"><path d="M1 0.5V9L3.2 7L4.8 10.5L6.3 9.8L4.8 6.5H7.5Z" fill="#fff" stroke="#222244" stroke-width=".9"/><text x="6.5" y="7" font-size="8" font-weight="bold" font-family="Liberation Sans, sans-serif" fill="#33335a">?</text></svg>
<svg style="left:822px;top:145px" width="12" height="10" viewBox="0 0 12 10"><rect x="3.5" y="2.5" width="6" height="5.5" fill="#d8d8ee" stroke="#7a7aa0" stroke-width="1"/><path d="M1 1.5H5M1 8.5H11M10.5 1V9" stroke="#8a8ab0" stroke-width="1"/><circle cx="2" cy="4" r="1.6" fill="#f0c040"/></svg>
<svg style="left:821.5px;top:246.5px" width="12" height="12" viewBox="0 0 12 12"><path d="M2 1.5V10M2 2.5H5M2 9.5H7M6 5H8" stroke="#8a8aa8" stroke-width="0.9" fill="none"/><rect x="0.5" y="0.5" width="2.6" height="2.6" fill="#8088b8"/><rect x="4" y="0.8" width="3.4" height="3.4" fill="#9aa2cc" stroke="#6a72a0" stroke-width=".6"/><rect x="7.5" y="3.8" width="3.4" height="4" fill="#9aa2cc" stroke="#6a72a0" stroke-width=".6"/><rect x="7" y="8.8" width="2.6" height="2.4" fill="#8088b8"/></svg>
<svg style="left:821px;top:369px" width="13" height="13" viewBox="0 0 13 13"><circle cx="6.5" cy="6.5" r="5.5" fill="none" stroke="#c4c4c4" stroke-width="1.1"/><path d="M6.5 3.2V9.8M3.2 6.5H9.8" stroke="#c4c4c4" stroke-width="1.2"/></svg>
<div class="a" style="left:834px;top:67px;width:16px;height:454px;background:#f3f3f3;"></div>
<svg style="left:838px;top:69px" width="8" height="3" viewBox="0 0 8 3"><path d="M0.5 1.5H7.5" stroke="#999" stroke-width="1.2" stroke-dasharray="1.2 1.6"/></svg>
<svg style="left:839px;top:74px" width="6" height="8" viewBox="0 0 6 8"><path d="M0.3 0.3V7.7L5.2 4Z" fill="#111"/></svg>
<svg style="left:837px;top:85px" width="10" height="10" viewBox="0 0 10 10"><path d="M1 9L1.6 7L5.5 3.1L6.9 4.5L3 8.4Z M6 2L8 0.6L9.4 2L8 4Z M5 2L8 5" fill="#bdbdbd" stroke="#bdbdbd" stroke-width=".8"/></svg>
<svg style="left:837px;top:97px" width="9" height="6" viewBox="0 0 9 6"><path d="M1 5L4.5 1.5L8 5" stroke="#c8c8c8" stroke-width="1.3" fill="none"/></svg>
<div class="a" style="left:835.3px;top:106.5px;width:12.5px;height:12px;background:#ffffff;border:1px solid #1a1a1a;box-sizing:border-box;"></div>
<svg style="left:835.3px;top:106.5px" width="12.5" height="12" viewBox="0 0 12.5 12"><path d="M0.8 0.8L11.7 11.2M11.7 0.8L0.8 11.2" stroke="#1a1a1a" stroke-width=".9"/></svg>
<div class="a" style="left:835.3px;top:119.70px;width:12.5px;height:11.55px;background:#161616"></div>
<div class="a" style="left:835.3px;top:132.20px;width:12.5px;height:11.47px;background:#3a3a3a"></div>
<div class="a" style="left:835.3px;top:143.64px;width:12.5px;height:12.37px;background:#4f4f4f"></div>
<div class="a" style="left:835.3px;top:155.96px;width:12.5px;height:12.37px;background:#666666"></div>
<div class="a" style="left:835.3px;top:168.28px;width:12.5px;height:12.37px;background:#7f7f7f"></div>
<div class="a" style="left:835.3px;top:180.60px;width:12.5px;height:12.37px;background:#989898"></div>
<div class="a" style="left:835.3px;top:192.92px;width:12.5px;height:12.37px;background:#b0b0b0"></div>
<div class="a" style="left:835.3px;top:205.24px;width:12.5px;height:12.37px;background:#c7c7c7"></div>
<div class="a" style="left:835.3px;top:217.56px;width:12.5px;height:12.37px;background:#dbdbdb"></div>
<div class="a" style="left:835.3px;top:229.88px;width:12.5px;height:12.37px;background:#ececec"></div>
<div class="a" style="left:835.3px;top:242.20px;width:12.5px;height:12.37px;background:#ffffff"></div>
<div class="a" style="left:835.3px;top:254.52px;width:12.5px;height:12.37px;background:#3d2f9b"></div>
<div class="a" style="left:835.3px;top:266.84px;width:12.5px;height:12.37px;background:#1ba0d8"></div>
<div class="a" style="left:835.3px;top:279.16px;width:12.5px;height:12.37px;background:#0f9e58"></div>
<div class="a" style="left:835.3px;top:291.48px;width:12.5px;height:12.37px;background:#ffe21a"></div>
<div class="a" style="left:835.3px;top:303.80px;width:12.5px;height:12.37px;background:#df3020"></div>
<div class="a" style="left:835.3px;top:316.12px;width:12.5px;height:12.37px;background:#e5098c"></div>
<div class="a" style="left:835.3px;top:328.44px;width:12.5px;height:12.37px;background:#a8479a"></div>
<div class="a" style="left:835.3px;top:340.76px;width:12.5px;height:12.37px;background:#f28a00"></div>
<div class="a" style="left:835.3px;top:353.08px;width:12.5px;height:12.37px;background:#ffc2c4"></div>
<div class="a" style="left:835.3px;top:365.40px;width:12.5px;height:12.37px;background:#7e6e66"></div>
<div class="a" style="left:835.3px;top:377.72px;width:12.5px;height:12.37px;background:#dcd6f4"></div>
<div class="a" style="left:835.3px;top:390.04px;width:12.5px;height:12.37px;background:#b4a6e2"></div>
<div class="a" style="left:835.3px;top:402.36px;width:12.5px;height:12.37px;background:#7696d6"></div>
<div class="a" style="left:835.3px;top:414.68px;width:12.5px;height:12.37px;background:#8672c8"></div>
<div class="a" style="left:835.3px;top:427.00px;width:12.5px;height:12.37px;background:#9488bc"></div>
<div class="a" style="left:835.3px;top:439.32px;width:12.5px;height:12.37px;background:#4c6298"></div>
<div class="a" style="left:835.3px;top:451.64px;width:12.5px;height:12.37px;background:#544c70"></div>
<div class="a" style="left:835.3px;top:463.96px;width:12.5px;height:12.37px;background:#6c86a8"></div>
<div class="a" style="left:835.3px;top:476.28px;width:12.5px;height:12.37px;background:#0a98d4"></div>
<div class="a" style="left:835px;top:119.5px;width:0.7px;height:369px;background:#8a8a8a;"></div>
<div class="a" style="left:847.3px;top:119.5px;width:0.7px;height:369px;background:#8a8a8a;"></div>
<svg style="left:837px;top:493px" width="9" height="6" viewBox="0 0 9 6"><path d="M1 1L4.5 4.5L8 1" stroke="#9a9a9a" stroke-width="1.2" fill="none"/></svg>
<svg style="left:837px;top:505px" width="9" height="7" viewBox="0 0 9 7"><path d="M1 0.8L3.8 3.5L1 6.2M4.6 0.8L7.4 3.5L4.6 6.2" stroke="#b4b4b4" stroke-width="1" fill="none"/></svg>
<div class="a" style="left:37px;top:493px;width:300px;height:13px;background:#f4f4f4;"></div>
<div class="a" style="left:37px;top:493px;width:300px;height:1px;background:#9c9c9c;"></div>
<div class="a" style="left:337px;top:493px;width:11px;height:13px;background:#f0f0f0;"></div>
<div class="a" style="left:348px;top:493px;width:275px;height:13px;background:#ffffff;"></div>
<div class="a" style="left:623px;top:493.5px;width:12px;height:12px;background:#ffffff;"></div>
<svg style="left:39px;top:494.5px" width="8" height="9.5" viewBox="0 0 8 9.5"><path d="M0.5 0.5H5L7.5 3V9H0.5Z" fill="#fff" stroke="#222" stroke-width="1"/><path d="M4 3.2V7.8M1.8 5.5H6.2" stroke="#222" stroke-width="1.1"/></svg>
<svg style="left:52px;top:496px" width="6" height="7" viewBox="0 0 6 7"><path d="M0.6 0V7" stroke="#666" stroke-width="1.1"/><path d="M5.5 0.3V6.7L1.8 3.5Z" fill="#666"/></svg>
<svg style="left:66px;top:496px" width="5" height="7" viewBox="0 0 5 7"><path d="M4.5 0.3V6.7L0.5 3.5Z" fill="#666"/></svg>
<span id="t39" class="t" style="left:85.5px;top:494px;font-size:9px;line-height:11px;color:#1a1a1a;transform:scaleX(0.8895);">1 из 1</span>
<svg style="left:122.5px;top:496px" width="5" height="7" viewBox="0 0 5 7"><path d="M0.5 0.3V6.7L4.5 3.5Z" fill="#666"/></svg>
<svg style="left:133.5px;top:496px" width="6" height="7" viewBox="0 0 6 7"><path d="M5.4 0V7" stroke="#666" stroke-width="1.1"/><path d="M0.5 0.3V6.7L4.2 3.5Z" fill="#666"/></svg>
<svg style="left:144.5px;top:494.5px" width="8" height="9.5" viewBox="0 0 8 9.5"><path d="M0.5 0.5H5L7.5 3V9H0.5Z" fill="#fff" stroke="#222" stroke-width="1"/><path d="M4 3.2V7.8M1.8 5.5H6.2" stroke="#222" stroke-width="1.1"/></svg>
<svg style="left:155px;top:493px" width="72" height="13" viewBox="0 0 72 13"><path d="M0.5 13V0.5H62C64.5 0.5 65.5 2 66.3 4.5L69.5 13Z" fill="#ffffff" stroke="none"/><path d="M0.5 13V0.5H62C64.5 0.5 65.5 2 66.3 4.5L69.5 13" fill="none" stroke="#a8a8a8" stroke-width="1"/></svg>
<span id="t40" class="t" style="left:167px;top:494px;font-size:9px;line-height:11px;color:#1a1a1a;transform:scaleX(0.8903);">Страница 1</span>
<svg style="left:332px;top:496px" width="3" height="8" viewBox="0 0 3 8"><path d="M1.5 0V8" stroke="#aaa" stroke-width="1.2" stroke-dasharray="1 1.3"/></svg>
<svg style="left:340px;top:496.5px" width="5" height="6" viewBox="0 0 5 6"><path d="M4 0.6L1.2 3L4 5.4" stroke="#333" stroke-width="1.4" fill="none"/></svg>
<div class="a" style="left:450px;top:494px;width:12.5px;height:10.5px;background:#c8c8c8;"></div>
<div class="a" style="left:610px;top:494px;width:12px;height:11.5px;background:#f0f0f0;"></div>
<svg style="left:614px;top:496.5px" width="5" height="6" viewBox="0 0 5 6"><path d="M1 0.6L3.8 3L1 5.4" stroke="#333" stroke-width="1.4" fill="none"/></svg>
<svg style="left:624px;top:495px" width="10" height="10" viewBox="0 0 10 10"><circle cx="4" cy="4" r="3" fill="#e8eef8" stroke="#444" stroke-width="1"/><path d="M6.2 6.2L9.3 9.3" stroke="#222" stroke-width="1.5"/><path d="M2.5 4H5.5M4 2.5V5.5" stroke="#444" stroke-width=".8"/></svg>
<div class="a" style="left:0px;top:506px;width:22px;height:15px;background:#f0f0f0;"></div>
<div class="a" style="left:22px;top:506px;width:613.3px;height:14.5px;background:#f5f5f5;"></div>
<div class="a" style="left:22px;top:505.5px;width:613px;height:1px;background:#dcdcdc;"></div>
<svg style="left:25px;top:509.5px" width="3" height="7" viewBox="0 0 3 7"><path d="M1.5 0V7" stroke="#888" stroke-width="1.2" stroke-dasharray="1 1.6"/></svg>
<svg style="left:32px;top:509.5px" width="5" height="7" viewBox="0 0 5 7"><path d="M0.3 0.2V6.8L4.5 3.5Z" fill="#111"/></svg>
<svg style="left:40px;top:508px" width="10" height="10" viewBox="0 0 10 10"><path d="M0.8 9.2L1.5 7L5.2 3.3L6.7 4.8L3 8.5Z" fill="#7aa" stroke="#223" stroke-width=".8"/><path d="M5.8 2.2L8 0.5L9.5 2L7.8 4.2Z M4.8 2.2L7.8 5.2" fill="#222" stroke="#222" stroke-width="1"/></svg>
<svg style="left:53px;top:509.5px" width="5" height="7" viewBox="0 0 5 7"><path d="M4.2 0.5L1 3.5L4.2 6.5" stroke="#c4c4c4" stroke-width="1.2" fill="none"/></svg>
<div class="a" style="left:62.5px;top:507px;width:12.5px;height:12.5px;background:#ffffff;border:1px solid #1a1a1a;box-sizing:border-box;"></div>
<svg style="left:62.5px;top:507px" width="12.5" height="12.5" viewBox="0 0 12.5 12.5"><path d="M0.8 0.8L11.7 11.7M11.7 0.8L0.8 11.7" stroke="#1a1a1a" stroke-width=".9"/></svg>
<div class="a" style="left:75px;top:507px;width:12.3px;height:12.5px;background:#161616;"></div>
<svg style="left:608.5px;top:510px" width="6" height="7" viewBox="0 0 6 7"><path d="M1 0.8L4 3.5L1 6.2" stroke="#c8c8c8" stroke-width="1.1" fill="none"/></svg>
<svg style="left:620.5px;top:510px" width="8" height="7" viewBox="0 0 8 7"><path d="M1 0.8L3.8 3.5L1 6.2M4.4 0.8L7.2 3.5L4.4 6.2" stroke="#c8c8c8" stroke-width="1" fill="none"/></svg>
<div class="a" style="left:0px;top:520.5px;width:850px;height:27.5px;background:#f0f0f0;"></div>
<div class="a" style="left:0px;top:519.8px;width:850px;height:1px;background:#e4e4e4;"></div>
<div class="a" style="left:0px;top:543.7px;width:850px;height:3.1px;background:#fdfdfd;"></div>
<div class="a" style="left:0px;top:546.7px;width:850px;height:1.3px;background:#b4b4b4;"></div>
<span id="t41" class="t" style="left:5.5px;top:527px;font-size:8.5px;line-height:12px;color:#1a1a1a;transform:scaleX(0.9187);">( 76,620; 202,143 )</span>
<div class="a" style="left:78px;top:527.5px;width:10px;height:9.5px;background:#ffffff;border:1px solid #222;box-sizing:border-box;"></div>
<svg style="left:81px;top:529.5px" width="5" height="6" viewBox="0 0 5 6"><path d="M0.3 0.2V5.8L4.3 3Z" fill="#111"/></svg>
<svg style="left:519.5px;top:527px" width="11" height="11" viewBox="0 0 11 11"><rect x="0.5" y="0.5" width="10" height="8" rx="0.8" fill="#c9d2ee" stroke="#7c86b8" stroke-width="1"/><rect x="1.6" y="1.8" width="2.6" height="5" fill="#e06a6a"/><rect x="6.8" y="1.8" width="2.6" height="5" fill="#6ab06a"/><circle cx="5.5" cy="4.4" r="2.3" fill="#f4f4f8" stroke="#555a80" stroke-width="0.9"/><circle cx="5.5" cy="4.4" r="0.9" fill="#333a60"/><path d="M3 10.2H8" stroke="#8c96c8" stroke-width="1.2"/></svg>
<svg style="left:540px;top:526.5px" width="12" height="12" viewBox="0 0 12 12"><path d="M1 6.5L5.5 2L10 6.5L5.5 11Z" fill="#fff" stroke="#44445a" stroke-width="0.9"/><path d="M4.5 3V0.8H6.5V3" stroke="#44445a" stroke-width="0.8" fill="none"/><path d="M2 7H9L5.5 10.4Z" fill="#ef8a1e"/><path d="M9.6 5.5C11.5 6 11.6 8.5 11.2 10.5C10.6 9 10.2 7.5 9 6.5Z" fill="#ef8a1e"/></svg>
<div class="a" style="left:555.5px;top:525.5px;width:13px;height:13px;background:#ffffff;border:1px solid #8a8a8a;box-sizing:border-box;"></div>
<svg style="left:555.5px;top:525.5px" width="13" height="13" viewBox="0 0 13 13"><path d="M0.8 0.8L12.2 12.2M12.2 0.8L0.8 12.2" stroke="#2a2a2a" stroke-width=".9"/></svg>
<span id="t42" class="t" style="left:571.4px;top:527px;font-size:9px;line-height:12px;color:#1a1a1a;transform:scaleX(0.9134);">Нет</span>
<div class="a" style="left:687px;top:524px;width:1px;height:18px;background:#d0d0d0;"></div>
<svg style="left:694px;top:526.5px" width="7" height="12" viewBox="0 0 7 12"><path d="M3.5 0.5L6 5.5L4.5 9H2.5L1 5.5Z" fill="#fff" stroke="#33334a" stroke-width=".9"/><path d="M3.5 2V6" stroke="#33334a" stroke-width=".8"/><rect x="1.5" y="9.5" width="4" height="2" fill="#8a8ab0"/></svg>
<div class="a" style="left:707px;top:526px;width:12px;height:12px;background:#161616;"></div>
<span id="t43" class="t" style="left:722.5px;top:527px;font-size:9px;line-height:12px;color:#1a1a1a;transform:scaleX(0.8978);">C:0 M:0 Y:0 K:100&nbsp; 0,200 мм</span>
<div class="a" style="left:0px;top:66px;width:3px;height:455px;background:#fafafa;"></div>
<div class="a" style="left:4px;top:69.5px;width:17px;height:16px;background:#ffffff;border:1px solid #c6c6c6;box-sizing:border-box;"></div>
<svg style="left:9px;top:72.5px" width="7" height="10" viewBox="0 0 7 10"><path d="M0.6 0.6V8L2.6 6.3L4 9.5L5.3 8.9L3.9 5.8H6.3Z" fill="#fff" stroke="#4a4a6a" stroke-width=".9"/></svg>
<svg style="left:17.5px;top:81.5px" width="3" height="3" viewBox="0 0 3 3"><path d="M3 0V3H0Z" fill="#111"/></svg>
<svg style="left:7px;top:91px" width="12" height="13" viewBox="0 0 12 13"><path d="M3.5 0.5C1 4 1 8 3.5 12" stroke="#33334a" stroke-width="1" fill="none"/><rect x="2" y="2.2" width="2" height="2" fill="#33334a"/><path d="M4.5 6L10 8.5L7.5 9L6.8 11.5Z" fill="#111"/></svg>
<svg style="left:17px;top:101px" width="3" height="3" viewBox="0 0 3 3"><path d="M3 0V3H0Z" fill="#111"/></svg>
<div class="a" style="left:4px;top:111px;width:16px;height:1px;background:#dadada;"></div>
<svg style="left:7px;top:118px" width="12" height="12" viewBox="0 0 12 12"><path d="M2.5 0.5V8.5H10.5M0.5 2.5H8.5V10.5" stroke="#2a2a44" stroke-width="1.1" fill="none"/><path d="M3.5 7.5L10 1" stroke="#2a2a44" stroke-width="0.9"/></svg>
<svg style="left:17px;top:127.5px" width="3" height="3" viewBox="0 0 3 3"><path d="M3 0V3H0Z" fill="#111"/></svg>
<svg style="left:6px;top:139.5px" width="13" height="13" viewBox="0 0 13 13"><circle cx="5" cy="4.6" r="4" fill="#f4f6fc" stroke="#66668a" stroke-width="0.9"/><path d="M1.8 5.2C3 6.6 7 6.6 8.2 5.2" stroke="#c0c6e0" stroke-width="1.2" fill="none"/><path d="M7.8 7.6L10.8 10.6" stroke="#22223a" stroke-width="1.5"/></svg>
<svg style="left:17px;top:149.5px" width="3" height="3" viewBox="0 0 3 3"><path d="M3 0V3H0Z" fill="#111"/></svg>
<div class="a" style="left:4px;top:158.5px;width:16px;height:1px;background:#dadada;"></div>
<svg style="left:7px;top:165px" width="12" height="12" viewBox="0 0 12 12"><path d="M2.5 0V5M0 2.5H5" stroke="#55557a" stroke-width="1"/><path d="M3 8C4 5.5 5 10 6.5 8.5C8 6 8.5 10.5 11.5 8" stroke="#22223a" stroke-width="1.4" fill="none"/></svg>
<svg style="left:17px;top:175px" width="3" height="3" viewBox="0 0 3 3"><path d="M3 0V3H0Z" fill="#111"/></svg>
<svg style="left:7px;top:187px" width="11" height="8" viewBox="0 0 11 8"><path d="M1 2.2C2.5 0 5.5 0.5 5 2.6C4.5 4.6 3 5 3.8 6.2C5 7.4 8.5 6.6 9.2 4" stroke="#22223a" stroke-width="1.6" fill="none" stroke-linecap="round"/></svg>
<svg style="left:7.5px;top:207.5px" width="11" height="10" viewBox="0 0 11 10"><rect x="0.6" y="0.6" width="9" height="8" fill="#eeeef8" stroke="#33335a" stroke-width="1.1"/></svg>
<svg style="left:17px;top:215.5px" width="3" height="3" viewBox="0 0 3 3"><path d="M3 0V3H0Z" fill="#111"/></svg>
<svg style="left:7px;top:226.5px" width="12" height="11" viewBox="0 0 12 11"><circle cx="5.5" cy="5.2" r="4.6" fill="#eeeef8" stroke="#33335a" stroke-width="1.1"/></svg>
<svg style="left:17px;top:235px" width="3" height="3" viewBox="0 0 3 3"><path d="M3 0V3H0Z" fill="#111"/></svg>
<svg style="left:7px;top:244px" width="12" height="12" viewBox="0 0 12 12"><path d="M3 1H8L10.5 5.5L8 10H3L0.5 5.5Z" fill="#eeeef8" stroke="#33335a" stroke-width="1.1"/></svg>
<svg style="left:17px;top:254px" width="3" height="3" viewBox="0 0 3 3"><path d="M3 0V3H0Z" fill="#111"/></svg>
<div class="a" style="left:4px;top:264px;width:16px;height:1px;background:#dadada;"></div>
<svg style="left:6px;top:270px" width="13" height="14" viewBox="0 0 13 14"><text x="0.8" y="12.4" font-size="14" font-weight="bold" font-family="Liberation Sans, sans-serif" fill="#e6e6f4" stroke="#44446e" stroke-width="0.8" textLength="10.5" lengthAdjust="spacingAndGlyphs">A</text></svg>
<svg style="left:17px;top:281px" width="3" height="3" viewBox="0 0 3 3"><path d="M3 0V3H0Z" fill="#111"/></svg>
<div class="a" style="left:4px;top:290px;width:16px;height:1px;background:#dadada;"></div>
<svg style="left:7px;top:298px" width="12" height="11" viewBox="0 0 12 11"><path d="M2 9L10 2" stroke="#22223a" stroke-width="1.3"/><path d="M0.5 7L3.5 10.5M8.5 0.5L11.5 4" stroke="#22223a" stroke-width="1.2"/></svg>
<svg style="left:17px;top:307px" width="3" height="3" viewBox="0 0 3 3"><path d="M3 0V3H0Z" fill="#111"/></svg>
<svg style="left:8px;top:318px" width="10" height="12" viewBox="0 0 10 12"><path d="M2 2L7.5 9.5" stroke="#22223a" stroke-width="1.2"/><rect x="0.5" y="0.5" width="3" height="3" fill="#f08010"/><rect x="6" y="8" width="3" height="3" fill="#f08010"/></svg>
<svg style="left:17px;top:327.5px" width="3" height="3" viewBox="0 0 3 3"><path d="M3 0V3H0Z" fill="#111"/></svg>
<div class="a" style="left:4px;top:336px;width:16px;height:1px;background:#dadada;"></div>
<svg style="left:7px;top:346px" width="11" height="9" viewBox="0 0 11 9"><rect x="2" y="2" width="8.5" height="6.5" fill="#8a8aa8"/><rect x="0.5" y="0.5" width="8.5" height="6.5" fill="#f4f4fa" stroke="#33335a" stroke-width="1"/></svg>
<svg style="left:17px;top:353px" width="3" height="3" viewBox="0 0 3 3"><path d="M3 0V3H0Z" fill="#111"/></svg>
<svg style="left:7px;top:363.5px" width="12" height="12" viewBox="0 0 12 12"><path d="M2.5 0.5H7.5C7.5 3 6.5 4 5 4.5V8M3 8.5H7" stroke="#55557a" stroke-width="1" fill="none"/><path d="M1 2L9 5" stroke="#55557a" stroke-width=".8"/><path d="M8.5 6L11.5 11.5H5.5Z" fill="#4a4a7a"/></svg>
<div class="a" style="left:4px;top:383.5px;width:16px;height:1px;background:#dadada;"></div>
<svg style="left:6px;top:390px" width="13" height="12" viewBox="0 0 13 12"><rect x="0.5" y="5.5" width="5.5" height="5.5" fill="#f08010"/><path d="M3 9L7.5 4.5L9 6L4.5 10.5Z" fill="#ccd" stroke="#22223a" stroke-width=".8"/><path d="M8 3L10.5 0.5L12.5 2.5L10 5Z M7 3L10 6" fill="#22223a" stroke="#22223a" stroke-width="1"/></svg>
<svg style="left:17px;top:400px" width="3" height="3" viewBox="0 0 3 3"><path d="M3 0V3H0Z" fill="#111"/></svg>
<svg style="left:7px;top:410px" width="12" height="12" viewBox="0 0 12 12"><path d="M1 4L4.5 0.8L8.5 4.5L5 8Z" fill="#fff" stroke="#33335a" stroke-width="1"/><path d="M2 4.5H7.5L5 7.2Z" fill="#e87a1a"/><path d="M8 7L11.5 11.5H4.5Z" fill="#f0a020"/></svg>
<svg style="left:17px;top:420px" width="3" height="3" viewBox="0 0 3 3"><path d="M3 0V3H0Z" fill="#111"/></svg>
<svg style="left:7px;top:431px" width="12" height="11" viewBox="0 0 12 11"><path d="M0.8 3.5L3.8 0.8L7.2 4L4.2 7Z" fill="#fff" stroke="#33335a" stroke-width="1"/><path d="M1.6 4H6.4L4.2 6.3Z" fill="#e87a1a"/><path d="M4.5 5.5H7.5V8.5" stroke="#e87a1a" stroke-width="1.4" fill="none"/><rect x="7" y="6" width="4.5" height="4.5" fill="#dde" stroke="#44447a" stroke-width="1"/></svg>
<div class="a" style="left:4px;top:449px;width:16px;height:1px;background:#dadada;"></div>
<svg style="left:6px;top:461px" width="13" height="13" viewBox="0 0 13 13"><circle cx="6.5" cy="6.5" r="5.6" fill="none" stroke="#c9c9c9" stroke-width="1.1"/><path d="M6.5 3.2V9.8M3.2 6.5H9.8" stroke="#c9c9c9" stroke-width="1.2"/></svg>
<div class="a" style="left:0px;top:0px;width:1.4px;height:548px;background:#fbfbfb;"></div>
</body></html>
